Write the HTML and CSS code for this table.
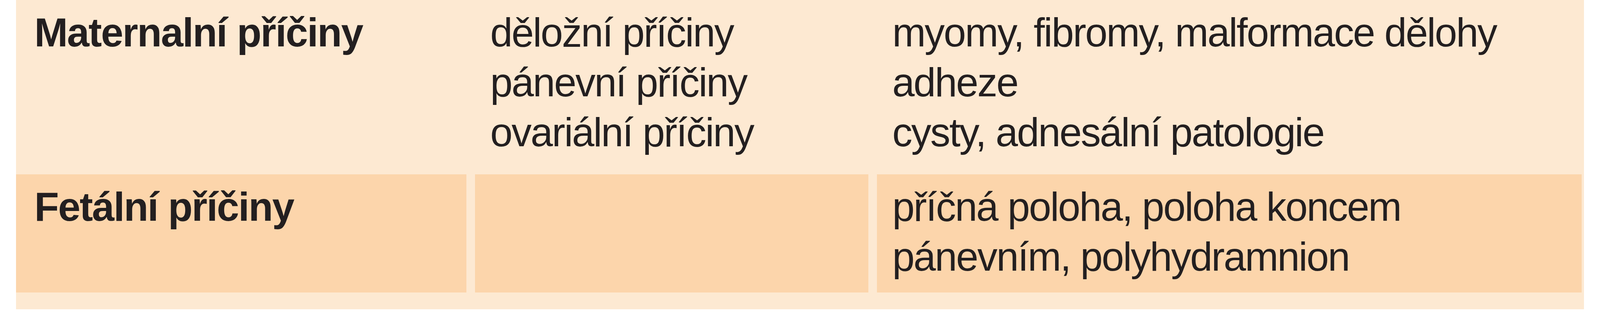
FILE: index.html
```html
<!DOCTYPE html>
<html lang="cs">
<head>
<meta charset="utf-8">
<title>Příčiny</title>
<link rel="stylesheet" href="styles.css">
</head>
<body>
<div class="table">
  <div class="cell head">Maternalní příčiny</div>
  <div class="cell">
    <div class="line">děložní příčiny</div>
    <div class="line">pánevní příčiny</div>
    <div class="line">ovariální příčiny</div>
  </div>
  <div class="cell">
    <div class="line">myomy, fibromy, malformace dělohy</div>
    <div class="line">adheze</div>
    <div class="line">cysty, adnesální patologie</div>
  </div>

  <div class="cell head alt">Fetální příčiny</div>
  <div class="cell alt"></div>
  <div class="cell alt">
    <div class="line">příčná poloha, poloha koncem</div>
    <div class="line">pánevním, polyhydramnion</div>
  </div>
</div>
</body>
</html>
```

FILE: styles.css
```css
html, body {
  margin: 0;
  padding: 0;
  background: #ffffff;
}

/* horizontal measures are proportional to the 4370px-wide frame */
.table {
  display: grid;
  grid-template-columns: 28.146vw 24.6vw 44.05vw;
  column-gap: 0.526vw;
  width: fit-content;
  margin-left: 1.007vw;
  padding: 0 0.137vw 43px 0;
  background: #fde9d2;
  font-family: "Liberation Sans", Arial, sans-serif;
  font-size: 103px;
  line-height: 128px;
  letter-spacing: -2.8px;
  color: #231f20;
}

.cell {
  padding: 20px 0 43px 0.961vw;
  white-space: nowrap;
}

.cell.head {
  font-weight: bold;
  letter-spacing: -2.3px;
  padding-left: 1.144vw;
}

.cell.alt {
  background: #fcd5ab;
  padding-bottom: 27px;
}

.line {
  display: block;
}
```
